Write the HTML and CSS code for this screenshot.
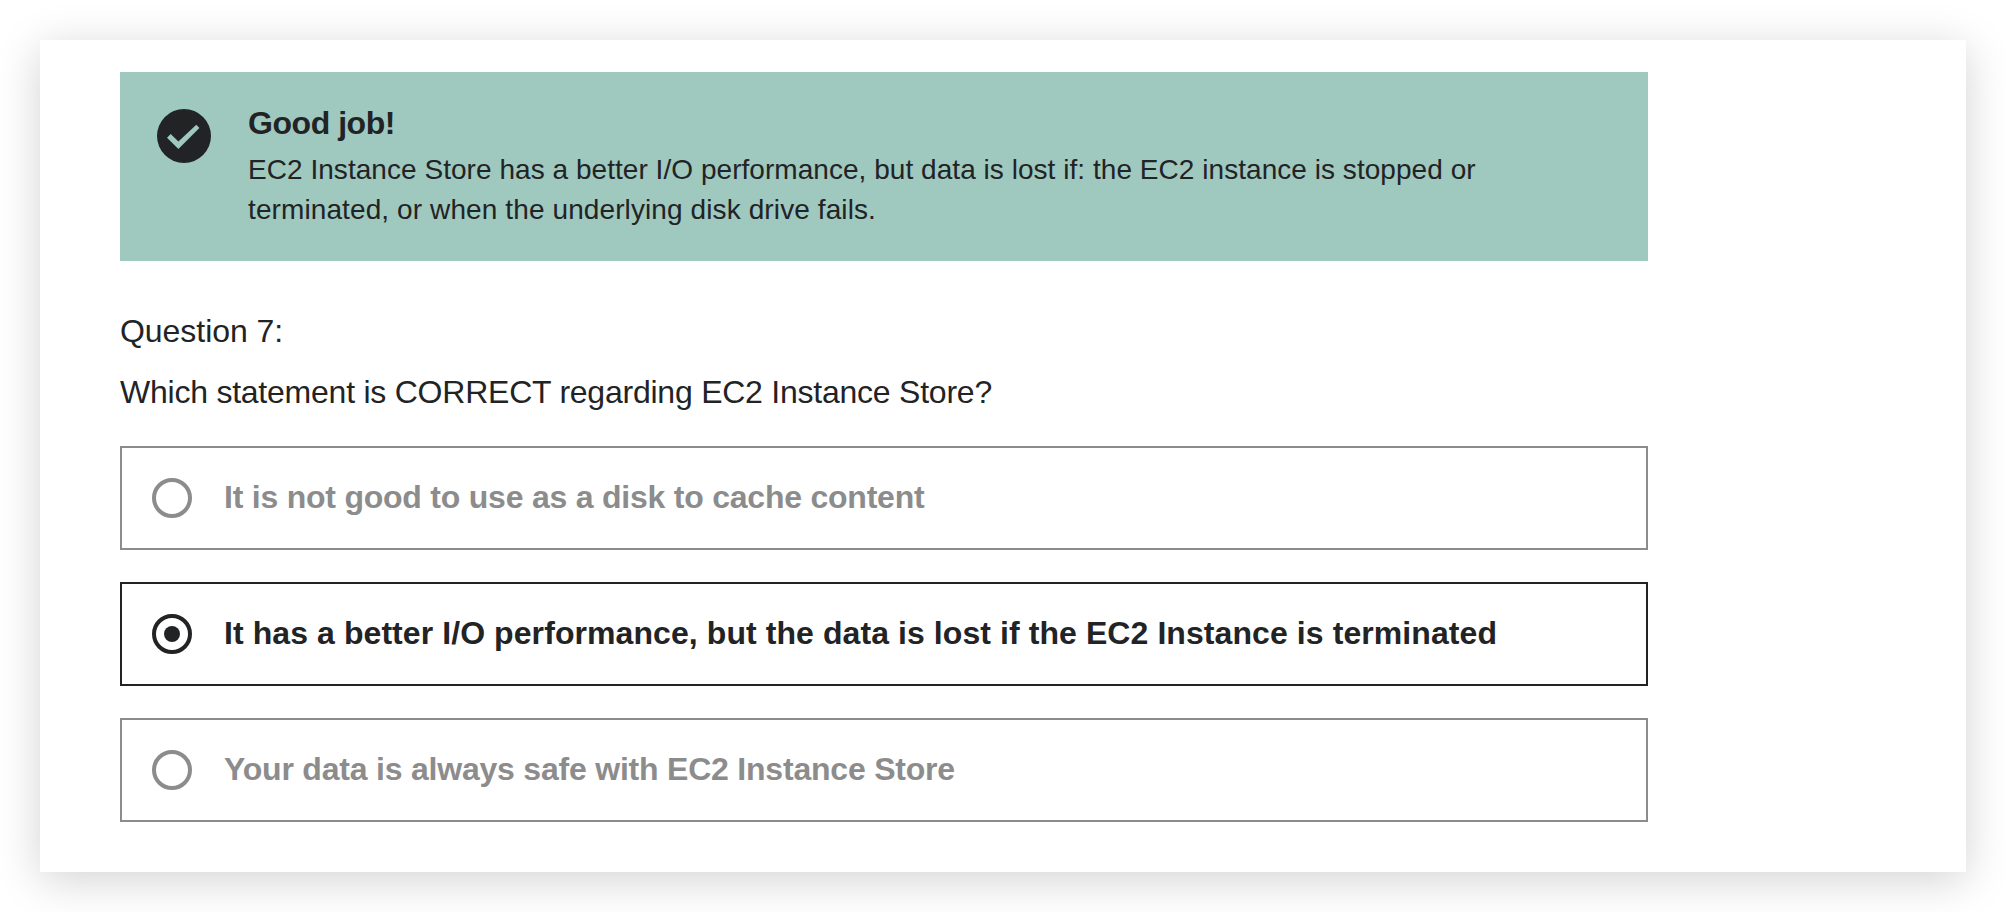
FILE: index.html
```html
<!DOCTYPE html>
<html lang="en">
<head>
<meta charset="utf-8">
<title>Question 7</title>
<link rel="stylesheet" href="styles.css">
</head>
<body>
<main class="card">
  <section class="feedback">
    <svg class="feedback-icon" viewBox="0 0 54 54" aria-hidden="true">
      <circle class="icon-disc" cx="27" cy="27" r="27"/>
      <path class="icon-check" d="M10 28.7 13.7 25 21.4 32.6 39.3 15.8 42.4 19 21.4 40Z"/>
    </svg>
    <div>
      <h1 class="feedback-title">Good job!</h1>
      <p class="feedback-text"><span class="line-first">EC2 Instance Store has a better I/O performance, but data is lost if: the EC2 instance is stopped or</span> <span class="line-second">terminated, or when the underlying disk drive fails.</span></p>
    </div>
  </section>
  <p class="question-number">Question 7:</p>
  <p class="question-text">Which statement is CORRECT regarding EC2 Instance Store?</p>
  <div class="options">
    <div class="option">
      <span class="radio"></span>
      <span class="label tight">It is not good to use as a disk to cache content</span>
    </div>
    <div class="option selected">
      <span class="radio"></span>
      <span class="label wide">It has a better I/O performance, but the data is lost if the EC2 Instance is terminated</span>
    </div>
    <div class="option">
      <span class="radio"></span>
      <span class="label snug">Your data is always safe with EC2 Instance Store</span>
    </div>
  </div>
</main>
</body>
</html>
```
FILE: styles.css
```css
* { box-sizing: border-box; }

body {
  margin: 0;
  padding: 40px;
  height: 912px;
  overflow: hidden;
  background: #fff;
  color: #222325;
  font: 32px/40px "Liberation Sans", Arial, sans-serif;
}

p, h1 { margin: 0; }

.card {
  height: 832px;
  padding: 32px 318px 0 80px;
  background: #fff;
  box-shadow: 0 8px 42px rgba(0, 0, 0, .175);
}

.feedback {
  display: flex;
  gap: 37px;
  height: 189px;
  padding: 32px 37px 0;
  background: #9fc8bf;
}

.feedback-icon {
  flex: none;
  width: 54px;
  height: 54px;
  margin-top: 5px;
}

.icon-disc { fill: #222325; }
.icon-check { fill: #9fc8bf; }

.feedback-title {
  font-size: 32px;
  line-height: 38px;
  letter-spacing: -.45px;
}

.feedback-text {
  width: 1260px;
  margin-top: 8px;
  font-size: 28px;
}

.line-first { letter-spacing: .043px; }
.line-second { letter-spacing: .105px; }

.question-number {
  margin-top: 50px;
  letter-spacing: -.05px;
}

.question-text {
  margin-top: 21px;
  letter-spacing: -.235px;
}

.options {
  display: grid;
  gap: 32px;
  margin-top: 34px;
}

.option {
  display: flex;
  align-items: center;
  gap: 32px;
  height: 104px;
  padding-left: 30px;
  border: 2px solid #8c8c8d;
  color: #8c8c8d;
  font-weight: 700;
}

.option.selected {
  border-color: #222325;
  color: #222325;
}

.radio {
  display: grid;
  place-items: center;
  flex: none;
  width: 40px;
  height: 40px;
  border: 4px solid currentColor;
  border-radius: 50%;
}

.selected .radio::after {
  content: "";
  width: 16px;
  height: 16px;
  border-radius: 50%;
  background: currentColor;
}

.label { padding-bottom: 2px; }
.tight { letter-spacing: -.225px; }
.wide { letter-spacing: .08px; }
.snug { letter-spacing: -.21px; }
```
